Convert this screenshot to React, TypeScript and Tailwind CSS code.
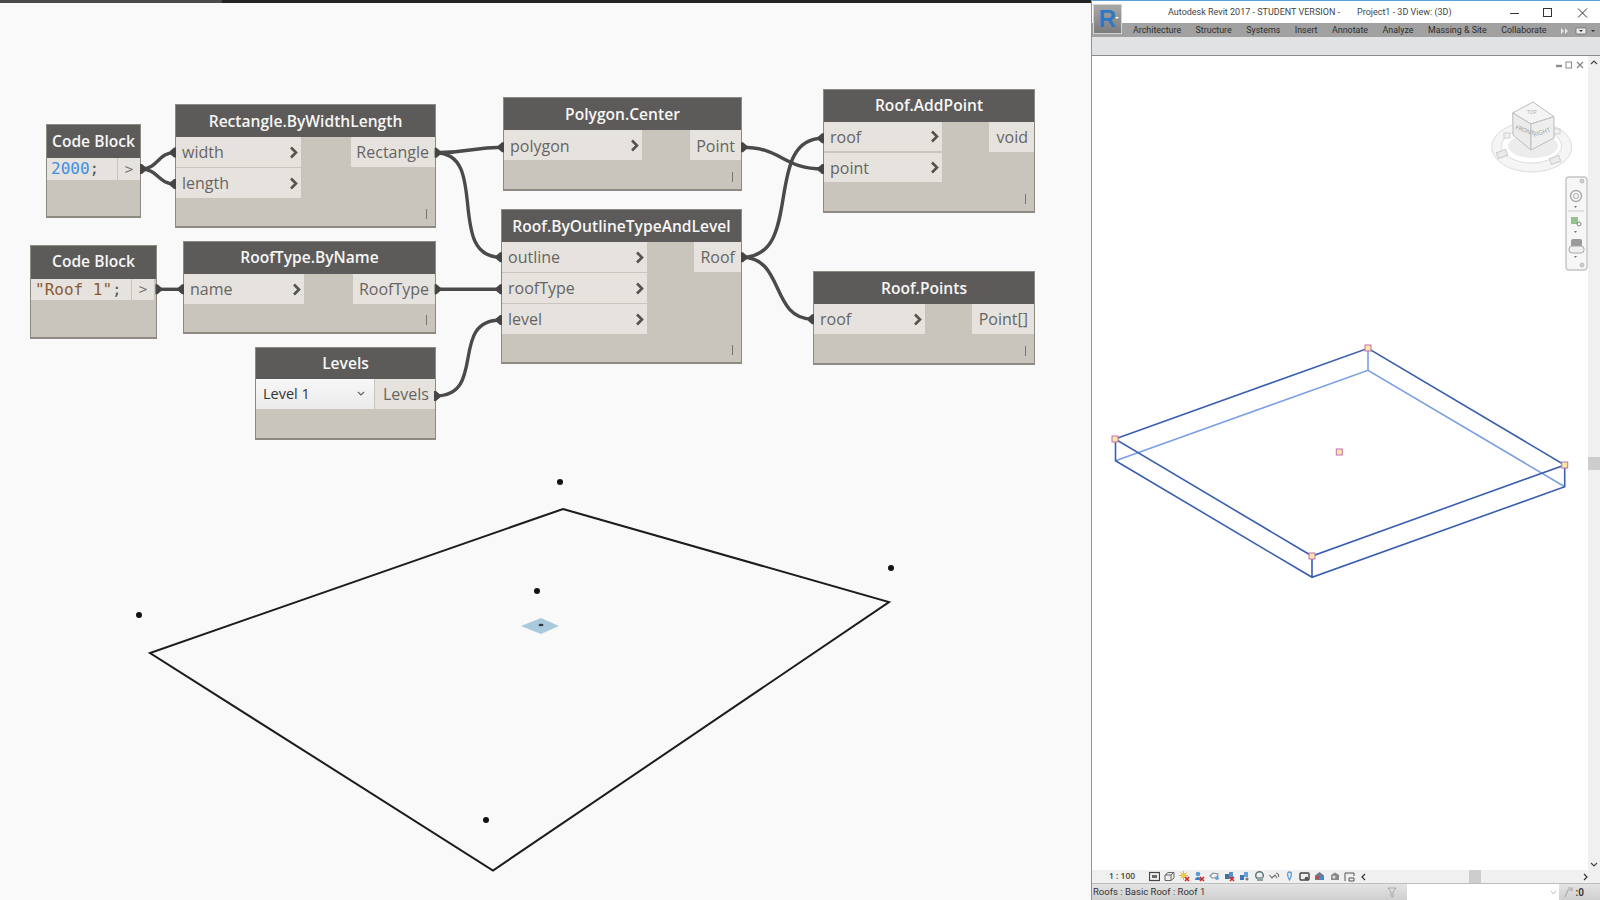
import type { ReactNode } from "react";

const FONT = "font-['Open_Sans',sans-serif]";

function Chevron() {
  return (
    <svg width="9" height="13" viewBox="0 0 9 13" className="shrink-0">
      <path d="M2 1.5 L7 6.5 L2 11.5" fill="none" stroke="#55534f" strokeWidth="2.6" />
    </svg>
  );
}

type Port = { label: string; box: string };

// one Dynamo node: dark title, two port columns, small lacing mark bottom right
function GraphNode(props: {
  title: string;
  box: string;
  head: string;
  inputs?: Port[];
  inCol?: string;
  output?: string;
  outBox?: string;
  mark?: boolean;
  children?: ReactNode;
}) {
  return (
    <div className={`absolute flex flex-col border border-b-2 border-[#8d8a84] bg-[#c9c5bd] ${props.box}`}>
      <div className={`flex shrink-0 items-center justify-center bg-[#5d5b59] text-[15.6px] font-semibold text-[#f6f6f6] ${props.head}`}>
        {props.title}
      </div>
      {props.children ?? (
        <div className="flex justify-between">
          <div className={`flex flex-col ${props.inCol}`}>
            {props.inputs?.map((p) => (
              <div key={p.label} className={`flex items-center justify-between bg-[#e6e3de] pl-[6px] pr-[3px] text-[16px] text-[#666563] ${p.box}`}>
                <span>{p.label}</span>
                <Chevron />
              </div>
            ))}
          </div>
          <div className={`flex items-center justify-end bg-[#e6e3de] pr-[6px] text-[16px] text-[#666563] ${props.outBox}`}>
            {props.output}
          </div>
        </div>
      )}
      {props.mark && <div className="absolute bottom-[7px] right-[8px] h-[10px] w-px bg-[#77746f]" />}
    </div>
  );
}

function CodeRow(props: { code: ReactNode; field: string; row: string; arrow: string }) {
  return (
    <div className={`flex ${props.row}`}>
      <div className={`flex items-center bg-[#e6e3de] font-['DejaVu_Sans_Mono',monospace] text-[16px] ${props.field}`}>{props.code}</div>
      <div className={`ml-px flex items-center justify-center bg-[#e6e3de] font-['DejaVu_Sans_Mono',monospace] text-[14px] text-[#77756f] ${props.arrow}`}>&gt;</div>
    </div>
  );
}

const wires = [
  "M141 169 C158 169 158 152.5 175 152.5",
  "M141 169 C158 169 158 184 175 184",
  "M435.6 152.7 C470 152.7 470 147.3 503 147.3",
  "M435.6 152.7 C490 152.7 445 257.3 501 257.3",
  "M156.5 289.3 L183 289.3",
  "M435.6 289.3 L501 289.3",
  "M435 396 C488 396 448 320 501 320",
  "M742 147.3 C782 147.3 783 169 823 169",
  "M742 257.3 C805 257.3 762 138.3 823 138.3",
  "M742 257.3 C785 257.3 770 319.3 813 319.3",
];

// port ends: flat side on the node, narrowing into the wire
const outEnds: [number, number][] = [[141, 169], [435.6, 152.7], [156.5, 289.3], [435.6, 289.3], [435, 396], [742, 147.3], [742, 257.3]];
const inEnds: [number, number][] = [[175, 152.5], [175, 184], [503, 147.3], [501, 257.3], [183, 289.3], [501, 289.3], [501, 320], [823, 169], [823, 138.3], [813, 319.3]];

const dots: [number, number][] = [[560, 482], [891, 568], [537, 591], [139, 615], [486, 820]];

function Handle({ x, y }: { x: number; y: number }) {
  return <rect x={x - 3} y={y - 3} width="6" height="6" fill="#fbe7a8" stroke="#c46fb0" strokeWidth="1" />;
}

function ViewIcon({ i }: { i: number }) {
  return (
    <svg width="11" height="11" viewBox="0 0 11 11" className="shrink-0">
      {i === 0 && <><rect x="0.5" y="1.5" width="10" height="8" fill="none" stroke="#444" strokeWidth="1.2" /><rect x="3" y="4" width="5" height="3" fill="#666" /></>}
      {i === 1 && <path d="M1 4 L4 1.5 H10 V7 L7 9.5 H1 Z M1 4 H7 V9.5 M7 4 L10 1.5" fill="none" stroke="#666" strokeWidth="1" />}
      {i === 2 && <><path d="M4.5 0 V9 M0 4.5 H9 M1.5 1.5 L7.5 7.5 M7.5 1.5 L1.5 7.5" stroke="#d8a520" strokeWidth="0.8" /><circle cx="4.5" cy="4.5" r="2.4" fill="#f2c840" /></>}
      {i === 3 && <><circle cx="4" cy="3" r="2.3" fill="#5b9bd5" /><path d="M1 9 C1 5 7 5 7 9 Z" fill="#3f7fc0" /></>}
      {i === 4 && <><path d="M1 5 L4 2 L9 3 L8 7 H3 Z" fill="none" stroke="#7f8f9a" strokeWidth="1.1" /><circle cx="8" cy="7" r="2" fill="#6aa5d8" /></>}
      {i === 5 && <><rect x="1" y="3" width="4" height="5" fill="#3f6f9f" /><rect x="5" y="1" width="4" height="7" fill="#5b8fc5" /></>}
      {i === 6 && <><rect x="1" y="4" width="4" height="5" fill="#3f74b5" /><rect x="5" y="1" width="4" height="5" fill="#6aa0d8" /><circle cx="8" cy="8" r="1.6" fill="#777" /></>}
      {i === 7 && <><circle cx="5.5" cy="4.5" r="3.8" fill="none" stroke="#5f7775" strokeWidth="1.5" /><rect x="3" y="6" width="6" height="4" fill="#8fa3a0" /></>}
      {i === 8 && <path d="M0.5 4 L3 7 L6 4 L8 7 M7 2 C9 2 10 4 9.5 6" fill="none" stroke="#666" strokeWidth="1.1" />}
      {i === 9 && <path d="M5.5 1 C8 1 8 5 5.5 9 C3 5 3 1 5.5 1 Z" fill="none" stroke="#5b9bd5" strokeWidth="1.3" />}
      {i === 10 && <><rect x="1" y="2" width="9" height="7" rx="1" fill="none" stroke="#444" strokeWidth="1.4" /><circle cx="7.5" cy="7.5" r="1.8" fill="#555" /></>}
      {i === 11 && <><path d="M1 9 V4.5 L5.5 1 L10 4.5 V9 Z" fill="#707a88" /><rect x="6" y="5" width="3" height="4" fill="#4b86c5" /><rect x="2" y="5" width="3" height="3" fill="#b05050" /></>}
      {i === 12 && <><path d="M2 4 L6 1.5 L10 4 V9 H2 Z" fill="#8a8a8a" /><circle cx="5" cy="6" r="1.5" fill="#ddd" /></>}
      {i === 13 && <path d="M1 2 H10 M1 2 V10 M10 2 V5 M5 7 H10 V10 H5 Z" fill="none" stroke="#555" strokeWidth="1" />}
      {(i === 2 || i === 3 || i === 5) && <path d="M6 6 L10 10 M10 6 L6 10" stroke="#d8281e" strokeWidth="1.6" />}
    </svg>
  );
}

function Canvas() {
  return (
    <div className={`relative h-full w-[1091px] shrink-0 overflow-hidden bg-[#f9f9f9] ${FONT}`}>
      <div className="flex h-[3px]">
        <div className="w-[222px] bg-[#4a4a4a]" />
        <div className="flex-1 bg-[#242424]" />
      </div>

      <GraphNode title="Code Block" box="left-[46px] top-[124px] h-[94px] w-[95px]" head="h-[33px] pt-[1px]">
        <CodeRow row="h-[22px]" field="w-[70px] pl-[4px] text-[#3f8de0]" arrow="w-[22px]" code={<>2000<span className="text-[#555]">;</span></>} />
      </GraphNode>

      <GraphNode
        title="Rectangle.ByWidthLength"
        box="left-[175px] top-[104px] h-[124px] w-[261px]"
        head="h-[32px] pt-[1px]"
        inCol="w-[125px] gap-px"
        inputs={[
          { label: "width", box: "h-[30px]" },
          { label: "length", box: "h-[30px]" },
        ]}
        output="Rectangle"
        outBox="h-[30px] w-[84px]"
        mark
      />

      <GraphNode title="Code Block" box="left-[30px] top-[245px] h-[94px] w-[127px]" head="h-[33px] pb-[1px]">
        <CodeRow row="h-[21px]" field="w-[100px] pl-[4px] text-[#8a5a33]" arrow="w-[22px] ml-[2px]" code={<>"Roof 1"<span className="text-[#555]">;</span></>} />
      </GraphNode>

      <GraphNode
        title="RoofType.ByName"
        box="left-[183px] top-[241px] h-[93px] w-[253px]"
        head="h-[32px]"
        inCol="w-[120px]"
        inputs={[{ label: "name", box: "h-[30px]" }]}
        output="RoofType"
        outBox="h-[30px] w-[82px]"
        mark
      />

      <GraphNode title="Levels" box="left-[255px] top-[347px] h-[93px] w-[181px]" head="h-[31px]">
        <div className="flex h-[30px]">
          <div className="flex w-[119px] items-center justify-between border-r border-[#c9c5bd] bg-gradient-to-b from-[#f7f7f7] to-[#ebebeb] pl-[7px] pr-[9px] text-[14.5px] text-[#333]">
            <span>Level 1</span>
            <svg width="8" height="6" viewBox="0 0 8 6">
              <path d="M1 1 L4 4 L7 1" fill="none" stroke="#666" strokeWidth="1.2" />
            </svg>
          </div>
          <div className="flex flex-1 items-center justify-end bg-[#e6e3de] pr-[6px] text-[16px] text-[#666563]">Levels</div>
        </div>
      </GraphNode>

      <GraphNode
        title="Polygon.Center"
        box="left-[503px] top-[97px] h-[94px] w-[239px]"
        head="h-[32px] pt-[1px]"
        inCol="w-[138px]"
        inputs={[{ label: "polygon", box: "h-[30px] pt-[1px]" }]}
        output="Point"
        outBox="h-[30px] w-[51px] pt-[1px]"
        mark
      />

      <GraphNode
        title="Roof.ByOutlineTypeAndLevel"
        box="left-[501px] top-[209px] h-[155px] w-[241px]"
        head="h-[32px] pt-[1px]"
        inCol="w-[145px] gap-px"
        inputs={[
          { label: "outline", box: "h-[30px]" },
          { label: "roofType", box: "h-[30px]" },
          { label: "level", box: "h-[30px]" },
        ]}
        output="Roof"
        outBox="h-[30px] w-[47px]"
        mark
      />

      <GraphNode
        title="Roof.AddPoint"
        box="left-[823px] top-[89px] h-[124px] w-[212px]"
        head="h-[32px]"
        inCol="w-[118px] gap-[2px]"
        inputs={[
          { label: "roof", box: "h-[29px]" },
          { label: "point", box: "h-[29px]" },
        ]}
        output="void"
        outBox="h-[30px] w-[45px]"
        mark
      />

      <GraphNode
        title="Roof.Points"
        box="left-[813px] top-[271px] h-[94px] w-[222px]"
        head="h-[32px] pt-[1px]"
        inCol="w-[111px]"
        inputs={[{ label: "roof", box: "h-[30px]" }]}
        output="Point[]"
        outBox="h-[30px] w-[62px]"
        mark
      />

      <svg className="pointer-events-none absolute inset-0" width="1091" height="900" viewBox="0 0 1091 900">
        {wires.map((d) => (
          <path key={d} d={d} fill="none" stroke="#4a4a4a" strokeWidth="3.4" />
        ))}
        {outEnds.map(([x, y]) => (
          <polygon key={`${x}-${y}`} points={`${x - 1},${y - 5} ${x + 1},${y - 5} ${x + 5},${y - 1.5} ${x + 5},${y + 1.5} ${x + 1},${y + 5} ${x - 1},${y + 5}`} fill="#454545" />
        ))}
        {inEnds.map(([x, y]) => (
          <polygon key={`${x}-${y}`} points={`${x + 1},${y - 5} ${x - 1},${y - 5} ${x - 5},${y - 1.5} ${x - 5},${y + 1.5} ${x - 1},${y + 5} ${x + 1},${y + 5}`} fill="#454545" />
        ))}
        <polygon points="563,509 889,602 493,870.5 150,653" fill="none" stroke="#1c1c1c" strokeWidth="2" />
        <polygon points="521,626 541,618 559,626 541,634" fill="#a9c9dc" />
        <ellipse cx="541" cy="625" rx="2.5" ry="1.3" fill="#2a3a44" />
        {dots.map(([x, y]) => (
          <circle key={x} cx={x} cy={y} r="3" fill="#111" />
        ))}
      </svg>
    </div>
  );
}

function RevitWindow() {
  const tabs = ["Architecture", "Structure", "Systems", "Insert", "Annotate", "Analyze", "Massing & Site", "Collaborate"];
  return (
    <div className={`relative flex h-full min-w-0 flex-1 flex-col border-l border-t border-[#5f9fdc] bg-white ${FONT}`}>
      <div className="flex h-[22px] shrink-0 items-center pt-[1px] font-['Roboto',sans-serif] text-[9px] text-[#444]">
        <span className="ml-[76px] w-[189px] whitespace-nowrap">Autodesk Revit 2017 - STUDENT VERSION -</span>
        <span className="whitespace-nowrap">Project1 - 3D View: (3D)</span>
        <svg className="ml-auto mr-[9px] shrink-0" width="81" height="12" viewBox="0 0 81 12">
          <path d="M0 6.5 H9" stroke="#333" strokeWidth="1" />
          <rect x="33.5" y="1.5" width="8" height="8" fill="none" stroke="#333" strokeWidth="1" />
          <path d="M68 1.5 L77 10.5 M77 1.5 L68 10.5" stroke="#333" strokeWidth="1" />
        </svg>
      </div>

      <div className="flex h-[14px] shrink-0 items-center gap-[14.5px] overflow-hidden whitespace-nowrap bg-[#a1a1a1] pl-[41px] pt-[2px] font-['Roboto',sans-serif] text-[8.9px] text-[#2e2e2e]">
        {tabs.map((t) => (
          <span key={t}>{t}</span>
        ))}
        <svg width="36" height="8" viewBox="0 0 36 8" className="shrink-0">
          <path d="M0 1 L3 4 L0 7 Z M4 1 L7 4 L4 7 Z" fill="#e8e8e8" />
          <rect x="15" y="1" width="10" height="6" rx="1" fill="#e8e8e8" stroke="#555" strokeWidth="0.6" />
          <path d="M18 3 H22 L20 5 Z M30 3 H34 L32 5 Z" fill="#333" />
        </svg>
      </div>

      <div className="h-[19px] shrink-0 border-b border-[#8a8a8a] bg-[#e1e2e3]" />

      <div className="relative flex min-h-0 flex-1">
        <div className="relative flex-1 overflow-hidden bg-white">
          <svg className="absolute inset-0" width="496" height="814" viewBox="1092 56 496 814">
            <g fill="none" stroke="#7b9fe3" strokeWidth="1.6">
              <path d="M1368 348 V370.3 M1115.5 460.7 L1368 370.3 L1564.7 486.7" />
            </g>
            <g fill="none" stroke="#3a5fae" strokeWidth="1.6">
              <path d="M1115 439 L1368 348.3 L1564.7 465 L1312 556 Z" />
              <path d="M1115.5 439 V460.7 L1312 577.3 L1564.7 486.7 V465 M1312 556 V577.3" />
            </g>
            <Handle x={1368} y={348} />
            <Handle x={1115} y={439} />
            <Handle x={1564.7} y={465} />
            <Handle x={1312} y={556} />
            <Handle x={1339.3} y={452} />

            {/* view controls in the corner */}
            <path d="M1556 66 H1562" stroke="#8d8d8d" strokeWidth="2.4" />
            <rect x="1566" y="62" width="5.5" height="6" fill="none" stroke="#888" />
            <path d="M1577 62 L1583 68 M1583 62 L1577 68" stroke="#888" strokeWidth="1.4" />

            {/* view cube */}
            <ellipse cx="1531.7" cy="147" rx="40" ry="25" fill="#f5f5f5" stroke="#dcdcdc" />
            <ellipse cx="1531.5" cy="146" rx="30" ry="17" fill="#fff" stroke="#dedede" />
            <ellipse cx="1533" cy="146" rx="25" ry="12" fill="#ececec" />
            <rect x="1497" y="151" width="10" height="6" fill="#eaeaea" stroke="#ccc" transform="rotate(-20 1502 154)" />
            <rect x="1550" y="157" width="10" height="6" fill="#eaeaea" stroke="#ccc" transform="rotate(-20 1555 160)" />
            <rect x="1552" y="129" width="8" height="5" fill="#f0f0f0" stroke="#d0d0d0" />
            <rect x="1504" y="133" width="6" height="5" fill="#f0f0f0" stroke="#d0d0d0" />
            <polygon points="1512.7,113 1533,102 1554,116.7 1531,124" fill="#f4f4f4" stroke="#bdbdbd" />
            <polygon points="1512.7,113 1531,124 1531,150 1513,135" fill="#ebebeb" stroke="#bdbdbd" />
            <polygon points="1531,124 1554,116.7 1554,138 1531,150" fill="#eeeeee" stroke="#bdbdbd" />
            <text x="1515" y="129" fontSize="6" fill="#999" transform="rotate(20 1515 129)">FRONT</text>
            <text x="1534" y="137" fontSize="6" fill="#999" transform="rotate(-18 1534 137)">RIGHT</text>
            <text x="1527" y="114" fontSize="5" fill="#aaa">TOP</text>

            {/* navigation bar */}
            <rect x="1566" y="177" width="21" height="93" rx="3" fill="#f6f6f6" stroke="#c4c4c4" strokeWidth="1.4" />
            <circle cx="1582" cy="181" r="2" fill="#cfcfcf" stroke="#aaa" strokeWidth="0.6" />
            <circle cx="1582" cy="265" r="2" fill="#cfcfcf" stroke="#aaa" strokeWidth="0.6" />
            <circle cx="1576" cy="196" r="5.5" fill="none" stroke="#aaa" strokeWidth="1.4" />
            <circle cx="1576" cy="196" r="2.5" fill="none" stroke="#bbb" strokeWidth="1.2" />
            <path d="M1568 211 H1584" stroke="#ccc" />
            <rect x="1571" y="217" width="7" height="7" fill="#93c48b" />
            <circle cx="1579" cy="224" r="2" fill="none" stroke="#888" />
            <rect x="1571" y="239" width="11" height="11" rx="2" fill="#9a9a9a" />
            <rect x="1569" y="246" width="15" height="7" rx="3" fill="#eee" stroke="#aaa" />
            <path d="M1574 206 H1577 L1575.5 208 Z M1574 231 H1577 L1575.5 233 Z M1574 256 H1577 L1575.5 258 Z" fill="#777" />
          </svg>
        </div>
        <div className="flex w-[12px] shrink-0 flex-col items-center bg-[#f0f0f0]">
          <svg className="mt-[4px]" width="8" height="5" viewBox="0 0 8 5">
            <path d="M1 4 L4 1 L7 4" fill="none" stroke="#444" strokeWidth="1.2" />
          </svg>
          <div className="mt-[392px] h-[13px] w-full bg-[#cdcdcd]" />
          <svg className="mb-[3px] mt-auto" width="8" height="5" viewBox="0 0 8 5">
            <path d="M1 1 L4 4 L7 1" fill="none" stroke="#444" strokeWidth="1.2" />
          </svg>
        </div>
      </div>

      <div className="flex h-[13px] shrink-0 items-center bg-[#f0f0f0] text-[8.5px] font-semibold text-[#444]">
        <span className="ml-[17px] w-[40px] shrink-0">1 : 100</span>
        <div className="flex gap-[4px]">
          {[0, 1, 2, 3, 4, 5, 6, 7, 8, 9, 10, 11, 12, 13].map((i) => (
            <ViewIcon key={i} i={i} />
          ))}
        </div>
        <svg className="ml-[6px]" width="5" height="8" viewBox="0 0 5 8">
          <path d="M4 1 L1 4 L4 7" fill="none" stroke="#333" strokeWidth="1.2" />
        </svg>
        <div className="ml-[103px] h-full w-[12px] bg-[#cdcdcd]" />
        <svg className="ml-[102px]" width="5" height="8" viewBox="0 0 5 8">
          <path d="M1 1 L4 4 L1 7" fill="none" stroke="#333" strokeWidth="1.2" />
        </svg>
      </div>

      <div className="flex h-[17px] shrink-0 items-center border-t border-[#bdbdbd] bg-gradient-to-b from-[#e4e4e4] to-[#cfcfcf] pl-[1px] font-['Roboto',sans-serif] text-[9.5px] text-[#333]">
        <span>Roofs : Basic Roof : Roof 1</span>
        <svg className="ml-auto" width="10" height="11" viewBox="0 0 10 11">
          <path d="M1 1 H9 L6 5 V10 L4 9 V5 Z" fill="none" stroke="#aaa" strokeWidth="1" />
        </svg>
        <div className="ml-[10px] flex h-full w-[152px] items-center justify-end bg-white pr-[2px]">
          <svg width="7" height="5" viewBox="0 0 7 5">
            <path d="M1 1 L3.5 4 L6 1" fill="none" stroke="#bbb" strokeWidth="1" />
          </svg>
        </div>
        <svg className="ml-[5px]" width="9" height="11" viewBox="0 0 9 11">
          <path d="M1 10 L4 3 H8 M4 1 H8 V4" fill="none" stroke="#aaa" strokeWidth="1.2" />
        </svg>
        <span className="ml-[3px] mr-[16px] text-[10px] font-semibold">:0</span>
      </div>

      {/* application button */}
      <div className="absolute left-[1px] top-[3px] flex h-[30px] w-[29px] items-center justify-center border border-[#d4d4d4] bg-gradient-to-b from-[#a8a8a8] to-[#7c7c7c]">
        <span className="font-['Liberation_Sans',sans-serif] text-[24px] font-bold leading-none text-[#2f79c4]">R</span>
        <span className="absolute right-[2px] top-[12px] h-0 w-0 border-x-[2px] border-t-[2px] border-x-transparent border-t-white" />
      </div>
    </div>
  );
}

export default function App() {
  return (
    <div className="flex h-[900px] w-[1600px] overflow-hidden bg-[#f9f9f9]">
      <Canvas />
      <RevitWindow />
    </div>
  );
}
